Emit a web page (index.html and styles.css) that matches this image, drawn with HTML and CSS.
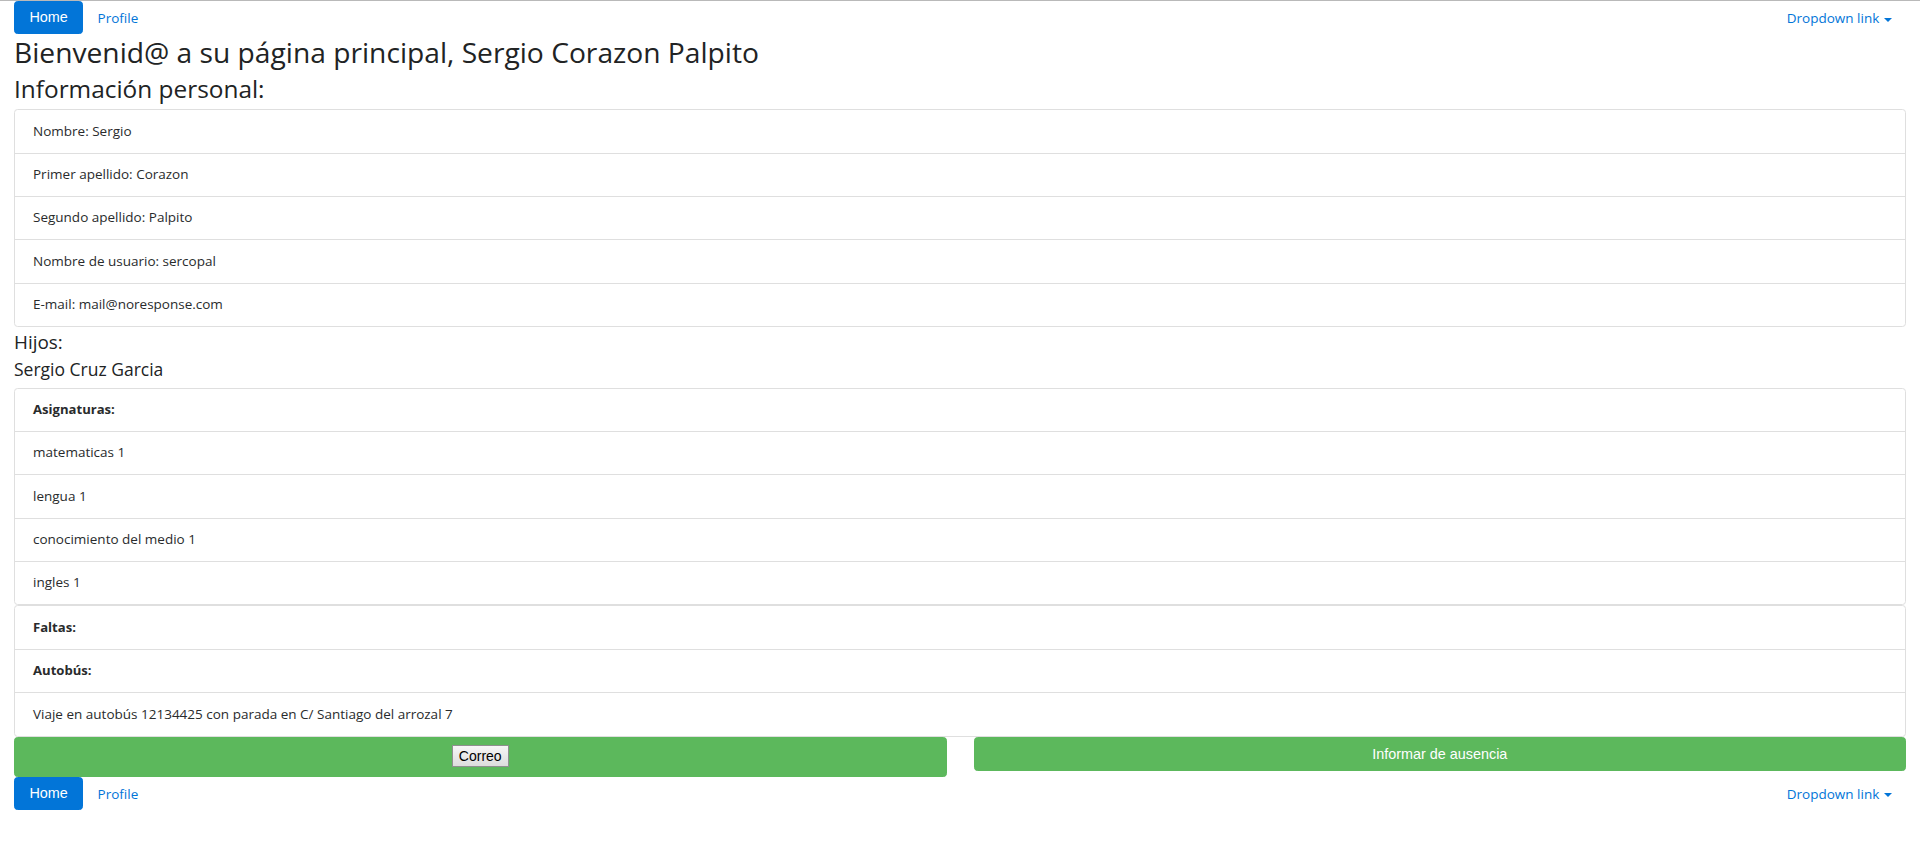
FILE: index.html
```html
<!DOCTYPE html>
<html lang="es">
<head>
<meta charset="utf-8">
<title>Página principal</title>
<link rel="stylesheet" href="styles.css">
</head>
<body>
<div class="page">
  <nav class="nav">
    <div class="nav-left">
      <button class="nav-btn" type="button">Home</button>
      <a class="nav-link" href="#">Profile</a>
    </div>
    <a class="nav-link" href="#">Dropdown link<span class="caret"></span></a>
  </nav>

  <h2 class="title">Bienvenid@ a su página principal, Sergio Corazon Palpito</h2>
  <h3 class="section">Información personal:</h3>
  <ul class="list-group list-personal">
    <li class="list-group-item">Nombre: Sergio</li>
    <li class="list-group-item">Primer apellido: Corazon</li>
    <li class="list-group-item">Segundo apellido: Palpito</li>
    <li class="list-group-item">Nombre de usuario: sercopal</li>
    <li class="list-group-item">E-mail: mail@noresponse.com</li>
  </ul>

  <h4 class="children">Hijos:</h4>
  <h5 class="child-name">Sergio Cruz Garcia</h5>
  <ul class="list-group">
    <li class="list-group-item"><strong class="label">Asignaturas:</strong></li>
    <li class="list-group-item">matematicas 1</li>
    <li class="list-group-item">lengua 1</li>
    <li class="list-group-item">conocimiento del medio 1</li>
    <li class="list-group-item">ingles 1</li>
  </ul>
  <ul class="list-group">
    <li class="list-group-item"><strong class="label">Faltas:</strong></li>
    <li class="list-group-item"><strong class="label">Autobús:</strong></li>
    <li class="list-group-item">Viaje en autobús 12134425 con parada en C/ Santiago del arrozal 7</li>
  </ul>

  <div class="actions">
    <div class="btn-success btn-mail"><button class="mail-button" type="button">Correo</button></div>
    <button class="btn-success btn-absence" type="button">Informar de ausencia</button>
  </div>

  <nav class="nav">
    <div class="nav-left">
      <button class="nav-btn" type="button">Home</button>
      <a class="nav-link" href="#">Profile</a>
    </div>
    <a class="nav-link" href="#">Dropdown link<span class="caret"></span></a>
  </nav>
</div>
</body>
</html>
```

FILE: styles.css
```css
* {
  box-sizing: border-box;
}

html,
body {
  margin: 0;
  padding: 0;
}

body {
  font-family: "Open Sans", "Noto Sans", sans-serif;
  font-size: 13.5px;
  line-height: 21.6px;
  color: #292b2c;
  background: #ffffff;
  border-top: 1px solid #b9b9b9;
}

.page {
  padding: 0 14px;
}

/* navigation */
.nav {
  display: flex;
  justify-content: space-between;
  align-items: flex-start;
  height: 36px;
}

.nav-left {
  display: flex;
  align-items: flex-start;
}

.nav-btn {
  font-family: "Liberation Sans", Arial, sans-serif;
  font-size: 14.4px;
  color: #ffffff;
  background: #0275d8;
  border: 1px solid #0275d8;
  border-radius: 3.6px;
  height: 33px;
  padding: 0 14.4px;
  line-height: 31px;
  margin: 0;
}

.nav-link {
  display: block;
  color: #0275d8;
  text-decoration: none;
  padding: 7.2px 14.4px;
  line-height: 21.6px;
}

.caret {
  display: inline-block;
  width: 0;
  height: 0;
  margin-left: 4.3px;
  vertical-align: middle;
  border-top: 4.3px solid #0275d8;
  border-left: 4.3px solid transparent;
  border-right: 4.3px solid transparent;
}

/* headings */
.title,
.section,
.children,
.child-name {
  font-weight: 400;
  margin: 0;
  color: #212324;
}

.title {
  font-size: 28.2px;
  line-height: 31.7px;
  margin-bottom: 6.5px;
}

.section {
  font-size: 24.4px;
  line-height: 27.7px;
  margin-bottom: 6.4px;
}

.children {
  font-size: 18.9px;
  line-height: 23.8px;
  margin-bottom: 5.5px;
}

.child-name {
  font-size: 17.5px;
  line-height: 19.8px;
  margin-bottom: 7.7px;
}

/* lists */
.list-group {
  list-style: none;
  margin: 0;
  padding: 0;
  border: 1px solid #dfdfdf;
  border-radius: 3.6px;
}

.list-personal {
  margin-bottom: 3.6px;
}

.list-group-item {
  padding: 10.4px 18px;
  line-height: 21.6px;
  border-top: 1px solid #dfdfdf;
}

.list-group-item:first-child {
  border-top: 0;
}

.label {
  font-weight: 700;
  font-size: 13.1px;
}

/* action buttons */
.actions {
  display: grid;
  grid-template-columns: 1fr 1fr;
  column-gap: 27px;
  align-items: start;
}

.btn-success {
  background: #5cb85c;
  border: 1px solid #5cb85c;
  border-radius: 3.6px;
  color: #ffffff;
}

.btn-mail {
  height: 40px;
  display: flex;
  justify-content: center;
  align-items: flex-start;
  padding-top: 7.5px;
}

.mail-button {
  font-family: "Liberation Sans", Arial, sans-serif;
  font-size: 14px;
  color: #000000;
  height: 22px;
  padding: 0 6px;
  line-height: 20px;
  border: 1px solid #8f8f8f;
  border-radius: 0;
  background: linear-gradient(#f6f6f6, #dddddd);
  margin: 0;
}

.btn-absence {
  height: 34px;
  margin: 0;
  font-family: "Liberation Sans", Arial, sans-serif;
  font-size: 14.4px;
  line-height: 32px;
  text-align: center;
  padding: 0 14px;
}
```
